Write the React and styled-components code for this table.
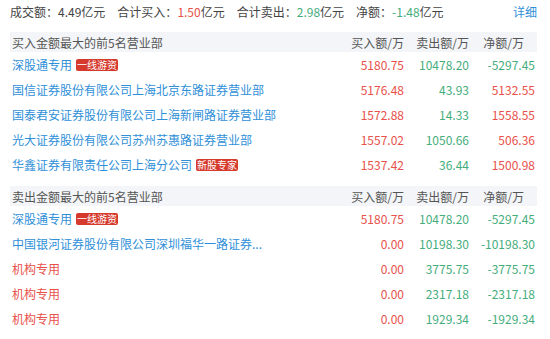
import React from "react";
import styled, { createGlobalStyle } from "styled-components";

const GlobalStyle = createGlobalStyle`
  html, body {
    margin: 0;
    padding: 0;
    background: #ffffff;
  }
  body {
    font-family: "Microsoft YaHei", "Noto Sans CJK SC", sans-serif;
    font-size: 12px;
    color: #333333;
  }
`;

const RED = "#e8504a";
const GREEN = "#45ad7c";
const BLUE = "#2f8fd8";

const buyList = [
  { name: "深股通专用", tag: "一线游资", buy: "5180.75", sell: "10478.20", net: "-5297.45" },
  { name: "国信证券股份有限公司上海北京东路证券营业部", buy: "5176.48", sell: "43.93", net: "5132.55" },
  { name: "国泰君安证券股份有限公司上海新闸路证券营业部", buy: "1572.88", sell: "14.33", net: "1558.55" },
  { name: "光大证券股份有限公司苏州苏惠路证券营业部", buy: "1557.02", sell: "1050.66", net: "506.36" },
  { name: "华鑫证券有限责任公司上海分公司", tag: "新股专家", buy: "1537.42", sell: "36.44", net: "1500.98" },
];

const sellList = [
  { name: "深股通专用", tag: "一线游资", buy: "5180.75", sell: "10478.20", net: "-5297.45" },
  { name: "中国银河证券股份有限公司深圳福华一路证券...", buy: "0.00", sell: "10198.30", net: "-10198.30" },
  { name: "机构专用", org: true, buy: "0.00", sell: "3775.75", net: "-3775.75" },
  { name: "机构专用", org: true, buy: "0.00", sell: "2317.18", net: "-2317.18" },
  { name: "机构专用", org: true, buy: "0.00", sell: "1929.34", net: "-1929.34" },
];

function Section({ title, rows }) {
  return (
    <Table>
      <HeadRow>
        <NameCell>{title}</NameCell>
        <NumHead>买入额/万</NumHead>
        <NumHead>卖出额/万</NumHead>
        <NumHead $pad>净额/万</NumHead>
      </HeadRow>
      {rows.map((r, i) => (
        <Row key={i}>
          <NameCell>
            <BrokerName $org={r.org}>{r.name}</BrokerName>
            {r.tag && <Tag>{r.tag}</Tag>}
          </NameCell>
          <NumCell $color={RED}>{r.buy}</NumCell>
          <NumCell $color={GREEN}>{r.sell}</NumCell>
          <NumCell $color={r.net.startsWith("-") ? GREEN : RED}>{r.net}</NumCell>
        </Row>
      ))}
    </Table>
  );
}

export default function App() {
  return (
    <>
      <GlobalStyle />
      <Page>
        <Summary>
          <SummaryItem>
            成交额：<Value>4.49</Value>亿元
          </SummaryItem>
          <SummaryItem>
            合计买入：<Value $color={RED}>1.50</Value>亿元
          </SummaryItem>
          <SummaryItem>
            合计卖出：<Value $color={GREEN}>2.98</Value>亿元
          </SummaryItem>
          <SummaryItem>
            净额：<Value $color={GREEN}>-1.48</Value>亿元
          </SummaryItem>
          <DetailLink>详细</DetailLink>
        </Summary>
        <Section title="买入金额最大的前5名营业部" rows={buyList} />
        <Section title="卖出金额最大的前5名营业部" rows={sellList} />
      </Page>
    </>
  );
}

//-----------页面-------------
const Page = styled.div`
  width: 527px;
  padding: 0 13px 0 10px;
`;

//顶部汇总
const Summary = styled.div`
  display: flex;
  align-items: center;
  height: 22px;
  gap: 12px;
  color: #444444;
  white-space: nowrap;
`;

const SummaryItem = styled.span``;

const Value = styled.span`
  color: ${(p) => p.$color || "#444444"};
`;

const DetailLink = styled.span`
  margin-left: auto;
  color: ${BLUE};
  cursor: pointer;
`;

//-----------表格-------------
const Table = styled.div`
  margin-top: 10px;
  & + & {
    margin-top: 9px;
  }
`;

const HeadRow = styled.div`
  display: grid;
  grid-template-columns: 1fr 65px 65px 66px;
  align-items: center;
  height: 20px;
  background: #f3f5f8;
  color: #555555;
`;

const Row = styled.div`
  display: grid;
  grid-template-columns: 1fr 65px 65px 66px;
  align-items: center;
  height: 25px;
  white-space: nowrap;
`;

const NameCell = styled.div`
  display: flex;
  align-items: center;
  padding-left: 2px;
  overflow: visible;
`;

const NumHead = styled.div`
  text-align: right;
  padding-right: ${(p) => (p.$pad ? "13px" : "2px")};
`;

const NumCell = styled.div`
  text-align: right;
  padding-right: 2px;
  color: ${(p) => p.$color};
`;

const BrokerName = styled.span`
  color: ${(p) => (p.$org ? RED : BLUE)};
  cursor: pointer;
`;

const Tag = styled.span`
  display: inline-block;
  margin-left: 4px;
  padding: 0 1px;
  height: 12px;
  line-height: 12px;
  font-size: 10px;
  color: #ffffff;
  background: #d53a2d;
  border-radius: 2px;
`;
